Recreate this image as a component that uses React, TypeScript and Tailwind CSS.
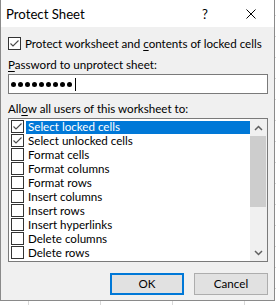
import React from "react";

const items: { label: string; checked: boolean }[] = [
  { label: "Select locked cells", checked: true },
  { label: "Select unlocked cells", checked: true },
  { label: "Format cells", checked: false },
  { label: "Format columns", checked: false },
  { label: "Format rows", checked: false },
  { label: "Insert columns", checked: false },
  { label: "Insert rows", checked: false },
  { label: "Insert hyperlinks", checked: false },
  { label: "Delete columns", checked: false },
  { label: "Delete rows", checked: false },
];

function Box({ checked }: { checked: boolean }) {
  return (
    <div className="w-[13px] h-[13px] shrink-0 border border-[#333333] bg-white flex items-center justify-center">
      {checked && (
        <svg width="11" height="11" viewBox="0 0 11 11">
          <polyline
            points="1.5,5.5 4,8 9.5,2.5"
            fill="none"
            stroke="#4a4a4a"
            strokeWidth="1.1"
          />
        </svg>
      )}
    </div>
  );
}

export default function App() {
  return (
    <div
      className="relative w-[276px] h-[305px] overflow-hidden bg-white bg-[linear-gradient(to_right,#d9d9d9_1px,transparent_1px),linear-gradient(to_bottom,#d9d9d9_1px,transparent_1px)] bg-[size:72px_21px] bg-[position:28px_15px]"
      style={{ fontFamily: '"Lato", "Liberation Sans", sans-serif' }}
    >
      <div className="w-[275px] h-[301px] flex flex-col border-l border-r border-b border-[#8a8a8a] bg-[#f0f0f0] text-black">
        {/* Title bar */}
        <div className="h-[27px] shrink-0 bg-white flex items-start">
          <div className="flex-1 pl-[5px] pt-[1px] text-[13.2px] leading-[26px]">Protect Sheet</div>
          <div className="w-[46px] h-[27px] flex justify-center pt-[1px] text-[13.2px] leading-[26px]">?</div>
          <div className="w-[46px] h-[27px] flex justify-center pt-[9px]">
            <svg width="10" height="10" viewBox="0 0 10 10">
              <path d="M0.5 0.5 L9.5 9.5 M9.5 0.5 L0.5 9.5" stroke="#000" strokeWidth="1" />
            </svg>
          </div>
        </div>

        {/* Body */}
        <div className="flex-1 flex flex-col pl-[7px] pr-[6px] pt-[10px] text-[11.6px] leading-[14px]">
          <div className="h-[13px] flex items-center gap-[4px]">
            <Box checked />
            <span>
              Protect worksheet and <span className="underline underline-offset-[2px]">c</span>ontents of locked cells
            </span>
          </div>

          <div className="mt-[8px]">
            <span className="underline underline-offset-[2px]">P</span>assword to unprotect sheet:
          </div>

          <div className="mt-[2px] h-[20px] border border-[#7a7a7a] bg-white flex items-center pl-[2px]">
            <div className="flex items-center gap-[2px]">
              {Array.from({ length: 9 }).map((_, i) => (
                <div key={i} className="w-[5px] h-[5px] rounded-full bg-black" />
              ))}
            </div>
            <div className="ml-[3px] w-[1px] h-[13px] bg-black" />
          </div>

          <div className="mt-[8px]">
            All<span className="underline underline-offset-[2px]">o</span>w all users of this worksheet to:
          </div>

          <div className="mt-[2px] h-[144px] border border-[#7a7a7a] bg-white flex">
            <div className="flex-1 pt-[1px] pl-[2px] flex flex-col">
              {items.map((it, i) => (
                <div key={it.label} className="h-[14px] flex items-start">
                  <Box checked={it.checked} />
                  <div
                    className={
                      i === 0
                        ? "ml-[2px] mt-[1px] h-[13px] flex-1 bg-[#0078d7] text-white pl-[2px] leading-[12px]"
                        : "ml-[2px] mt-[1px] h-[13px] flex-1 pl-[2px] leading-[12px]"
                    }
                  >
                    {it.label}
                  </div>
                </div>
              ))}
            </div>
            {/* Scrollbar */}
            <div className="w-[17px] bg-[#f0f0f0] flex flex-col">
              <div className="h-[17px] flex items-center justify-center">
                <svg width="9" height="6" viewBox="0 0 9 6">
                  <polyline points="1,5 4.5,1.5 8,5" fill="none" stroke="#606060" strokeWidth="1.5" />
                </svg>
              </div>
              <div className="h-[71px] w-[16px] bg-[#cdcdcd]" />
              <div className="flex-1" />
              <div className="h-[17px] flex items-center justify-center">
                <svg width="9" height="6" viewBox="0 0 9 6">
                  <polyline points="1,1 4.5,4.5 8,1" fill="none" stroke="#606060" strokeWidth="1.5" />
                </svg>
              </div>
            </div>
          </div>

          <div className="mt-[11px] flex justify-end gap-[10px]">
            <div className="w-[74px] h-[22px] border-2 border-[#0078d7] bg-[#e1e1e1] flex items-center justify-center">
              OK
            </div>
            <div className="w-[74px] h-[22px] border border-[#adadad] bg-[#e1e1e1] flex items-center justify-center">
              Cancel
            </div>
          </div>
        </div>
      </div>
    </div>
  );
}
